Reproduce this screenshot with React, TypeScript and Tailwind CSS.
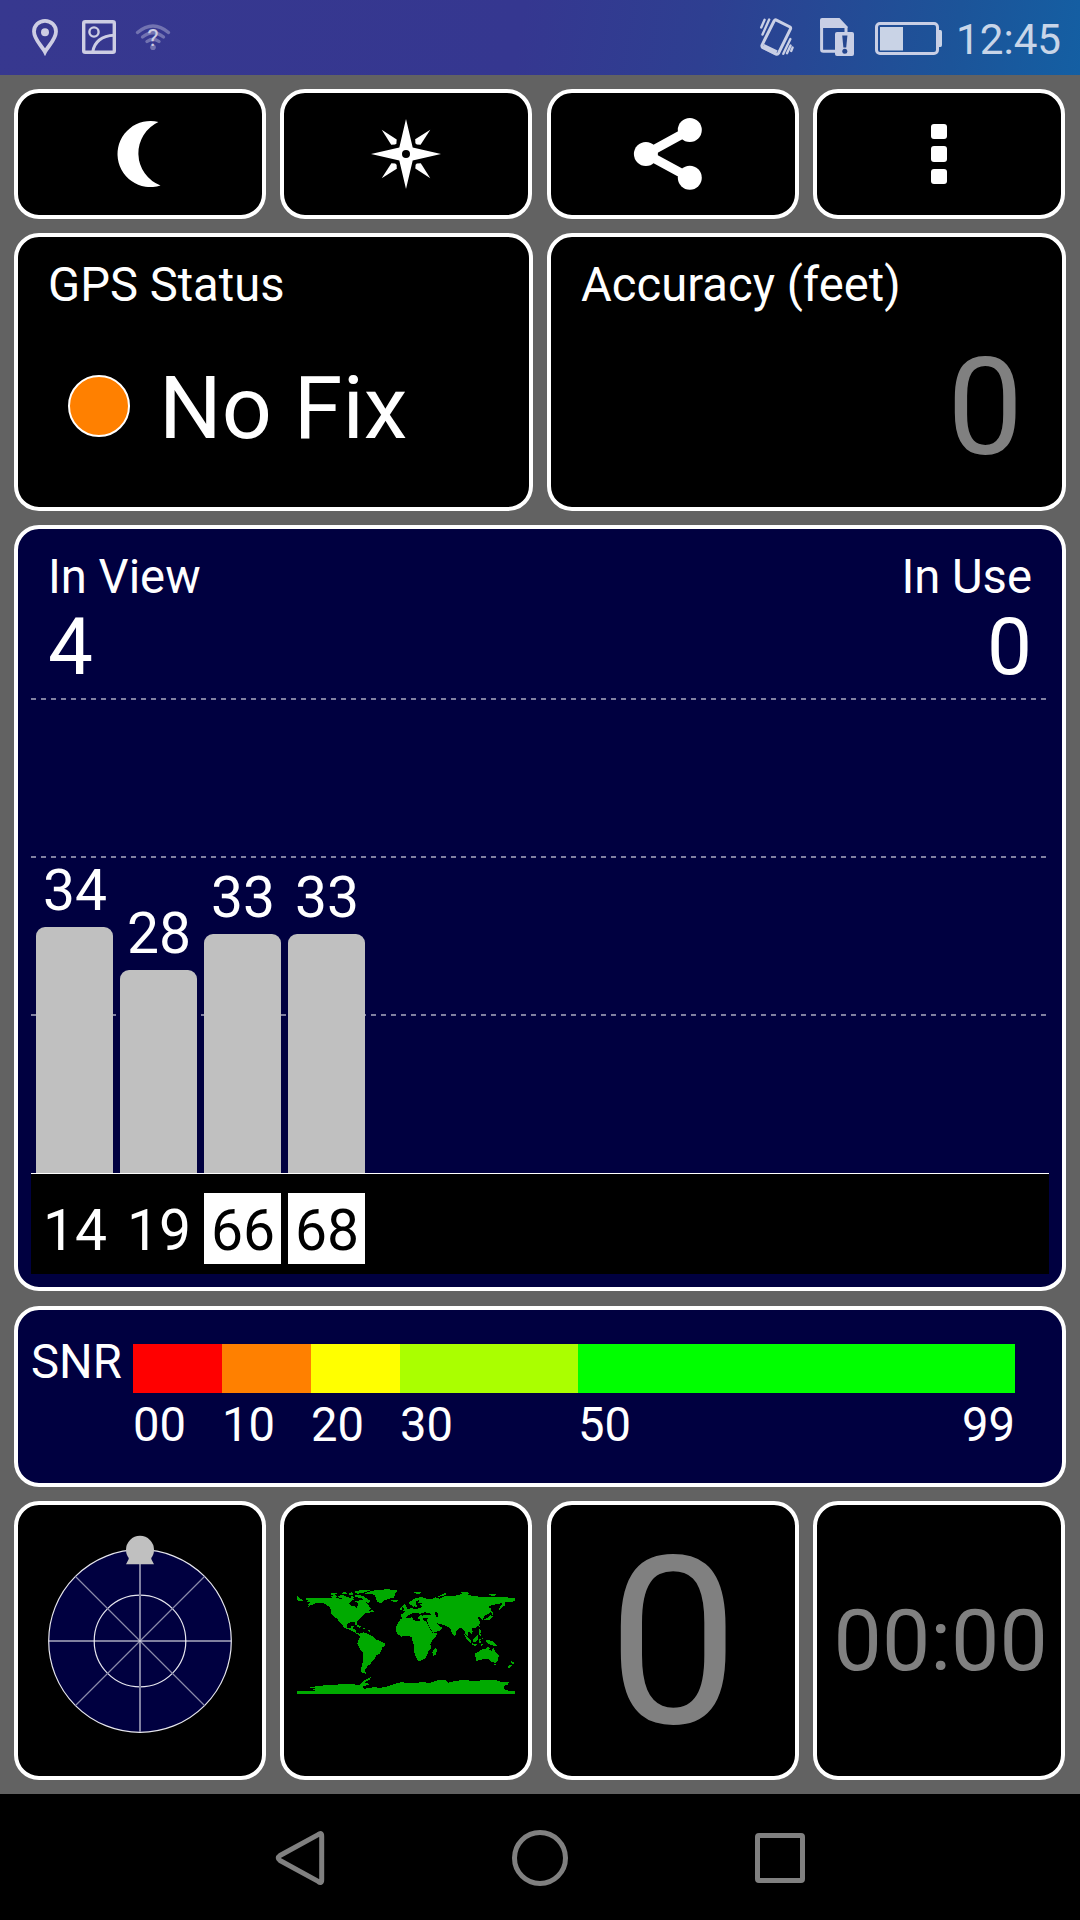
import type { ReactNode } from "react";

interface Satellite {
  id: number;
  snr: number;
  glonass: boolean;
}

const satellites: Satellite[] = [
  { id: 14, snr: 34, glonass: false },
  { id: 19, snr: 28, glonass: false },
  { id: 66, snr: 33, glonass: true },
  { id: 68, snr: 33, glonass: true },
];

const snrBands = [
  { label: "00", size: "w-[89px]", color: "bg-[#ff0000]" },
  { label: "10", size: "w-[89px]", color: "bg-[#ff8000]" },
  { label: "20", size: "w-[89px]", color: "bg-[#ffff00]" },
  { label: "30", size: "w-[178px]", color: "bg-[#aaff00]" },
  { label: "50", size: "w-[437px]", color: "bg-[#00ff00]" },
];

const PX_PER_DB = 7.24;

function Card({ className = "", children }: { className?: string; children: ReactNode }) {
  return (
    <div className={`rounded-[25px] border-4 border-white ${className}`}>{children}</div>
  );
}

function StatusBar() {
  return (
    <header className="h-[75px] flex items-center justify-between bg-[linear-gradient(100deg,#37388f_0%,#353790_48%,#2e3f91_65%,#1c5499_88%,#145fa3_100%)]">
      <svg width="180" height="75" viewBox="0 0 180 75" fill="none" stroke="#cdcde3">
        <path
          d="M45 52 C42 46 34 39.5 34 31.5 A11 10.7 0 0 1 56 31.5 C56 39.5 48 46 45 52 Z"
          strokeWidth="3.8"
        />
        <circle cx="45" cy="32.3" r="4" fill="#cdcde3" stroke="none" />
        <rect x="83.7" y="21.7" width="30.6" height="30.6" rx="1.5" strokeWidth="3.4" />
        <circle cx="94" cy="32" r="4.6" strokeWidth="2.4" />
        <path d="M92.8 52 C94 42 102 35.5 114 35.2" strokeWidth="3" />
        <g stroke="#7273b1" strokeWidth="3.4" strokeLinecap="round">
          <path d="M137.5 32.5 Q153 19.5 168.5 32.5" />
          <path d="M142.5 37 Q153 28.5 163.5 37" />
          <path d="M147 41.5 Q153 37 159 41.5" />
        </g>
        <circle cx="153" cy="47.3" r="2.8" fill="#7273b1" stroke="none" />
        <text
          x="153"
          y="45.5"
          textAnchor="middle"
          fontSize="24"
          fill="#cdcde3"
          stroke="none"
          fontFamily="Roboto, sans-serif"
        >
          ?
        </text>
      </svg>
      <div className="flex items-center">
        <svg width="200" height="75" viewBox="752 0 200 75" fill="none" stroke="#c9cfe5">
          <path
            d="M775.9 19.8 L790 27 Q791 27.7 790.5 29 L778.5 53.2 Q777.7 54.6 776 54 L762.5 47.4 Q761.6 46.6 762 45.2 L774.2 20.8 Q775 19.5 775.9 19.8 Z"
            strokeWidth="3"
          />
          <path d="M763 46.2 L776.5 52.8" strokeWidth="5" />
          <g strokeWidth="2.4" strokeLinecap="round">
            <path d="M769.2 19.5 L762.5 34.6 M764.6 19.8 L761.2 27.5" />
            <path d="M790.4 39 L783.3 53.8 M790.6 45.5 L787 53.2 M792.6 47.6 L791.2 51" />
          </g>
          <path
            d="M821.6 28 V49.5 Q821.6 51.3 823.4 51.3 H836 M846 32 V27"
            strokeWidth="3"
          />
          <path d="M820 28 V20 Q820 18 822 18 H839.5 L847.5 26.5 V28 Z" fill="#c9cfe5" stroke="none" />
          <rect x="835" y="32" width="19" height="24" rx="2" fill="#c9cfe5" stroke="none" />
          <path d="M842.2 35.5 H847.4 L846.2 47.5 H843.4 Z" fill="#26478f" stroke="none" />
          <circle cx="844.8" cy="51.2" r="2.5" fill="#26478f" stroke="none" />
          <rect x="876.5" y="23.5" width="61" height="30" rx="3.5" strokeWidth="3" />
          <rect x="880" y="27" width="23" height="23.5" fill="#c9d3e6" stroke="none" />
          <path d="M939 30 H940.5 Q942 30 942 32 V45 Q942 47 940.5 47 H939 Z" fill="#c9d3e6" stroke="none" />
        </svg>
        <span className="w-[128px] pl-[4px] pt-[4px] text-[42.2px] leading-[48px] text-[#c8d5e8]">
          12:45
        </span>
      </div>
    </header>
  );
}

function Toolbar() {
  const button = "h-[130px] bg-black flex items-center justify-center";
  return (
    <div className="grid grid-cols-[repeat(4,252px)] gap-[14.4px]">
      <Card className={button}>
        <svg width="80" height="80" viewBox="100 114 80 80" fill="white">
          <path d="M158.4 122 A33 33 0 1 0 160.5 185.5 A34.5 34.5 0 0 1 158.4 122 Z" />
        </svg>
      </Card>
      <Card className={button}>
        <svg width="80" height="80" viewBox="-40 -40 80 80" fill="white">
          <path
            fillRule="evenodd"
            d="M0 -35 L6.7 -6.5 L35 0 L6.7 6.5 L0 35 L-6.7 6.5 L-35 0 L-6.7 -6.5 Z M4 0 A4 4 0 1 0 -4 0 A4 4 0 1 0 4 0 Z"
          />
          {[0, 90, 180, 270].map((angle) => (
            <path
              key={angle}
              transform={`rotate(${angle})`}
              d="M-24.3 -24.3 L-9.3 -14.6 L-9.6 -10.8 L-10.8 -9.4 L-14.8 -9.2 Z"
            />
          ))}
        </svg>
      </Card>
      <Card className={button}>
        <svg width="80" height="80" viewBox="633 114 80 80" fill="white">
          <path d="M689.8 130 L646 154 L689.8 177.7" fill="none" stroke="white" strokeWidth="9" />
          <circle cx="645.9" cy="154" r="12" />
          <circle cx="689.8" cy="130" r="12" />
          <circle cx="689.8" cy="177.7" r="12" />
        </svg>
      </Card>
      <Card className={`${button} flex-col gap-[7px]`}>
        <span className="size-[15.4px] rounded-[3px] bg-white" />
        <span className="size-[15.4px] rounded-[3px] bg-white" />
        <span className="size-[15.4px] rounded-[3px] bg-white" />
      </Card>
    </div>
  );
}

function StatusCards() {
  return (
    <div className="mt-[14px] grid grid-cols-2 gap-[14px]">
      <Card className="h-[278px] bg-black pl-[30px] pt-[20px]">
        <div className="text-[47.2px] leading-[56px]">GPS Status</div>
        <div className="mt-[45px] flex">
          <span className="ml-[20px] mt-[17px] size-[62px] rounded-full border-2 border-white bg-[#ff8000]" />
          <span className="ml-[29px] text-[88px] leading-[100px]">No Fix</span>
        </div>
      </Card>
      <Card className="h-[278px] bg-black pl-[30px] pr-[39px] pt-[20px]">
        <div className="text-[47.2px] leading-[56px]">Accuracy (feet)</div>
        <div className="mt-[27px] text-right text-[135px] leading-[136px] text-[#808080]">0</div>
      </Card>
    </div>
  );
}

function SatelliteChart() {
  return (
    <Card className="mt-[14px] h-[766px] bg-[#000040] px-[13px]">
      <div className="h-[169px] px-[17px] pt-[20px] flex justify-between">
        <div>
          <div className="text-[47.2px] leading-[56px]">In View</div>
          <div className="mt-[2px] text-[80px] leading-[80px]">{satellites.length}</div>
        </div>
        <div className="text-right">
          <div className="text-[47.2px] leading-[56px]">In Use</div>
          <div className="mt-[2px] text-[80px] leading-[80px]">0</div>
        </div>
      </div>
      <div className="relative h-[475px]">
        <div className="absolute inset-0">
          {[75, 50, 25].map((level) => (
            <div key={level} className="h-[158px]">
              <div className="h-[2px] bg-[repeating-linear-gradient(90deg,#8080a0_0_5px,transparent_5px_10px)]" />
            </div>
          ))}
        </div>
        <div className="relative h-full flex items-end gap-[7px] pl-[5px]">
          {satellites.map((sat) => (
            <div key={sat.id} className="w-[77px]">
              <div className="mb-[8px] pl-px text-center text-[57px] leading-[57px]">{sat.snr}</div>
              <div
                className="rounded-t-[9px] bg-[#c0c0c0]"
                style={{ height: Math.round(sat.snr * PX_PER_DB) }}
              />
            </div>
          ))}
        </div>
      </div>
      <div className="h-[101px] border-t border-white bg-black flex gap-[7px] pl-[5px] pt-[19px]">
        {satellites.map((sat) => (
          <div
            key={sat.id}
            className={`h-[71px] w-[77px] pl-px text-center text-[57px] leading-[75px] ${
              sat.glonass ? "bg-white text-black" : ""
            }`}
          >
            {sat.id}
          </div>
        ))}
      </div>
    </Card>
  );
}

function SnrLegend() {
  return (
    <Card className="mt-[15px] h-[181px] bg-[#000040] pl-[13px] pt-[34px] flex text-[47.2px]">
      <span className="-mt-[6px] w-[102px] leading-[48px]">SNR</span>
      <div className="w-[882px]">
        <div className="flex">
          {snrBands.map((band) => (
            <span key={band.label} className={`h-[49px] ${band.size} ${band.color}`} />
          ))}
        </div>
        <div className="mt-[4px] flex leading-[56px]">
          {snrBands.map((band) => (
            <span key={band.label} className={`${band.size} last:flex last:justify-between`}>
              {band.label}
              {band.label === "50" && <span>99</span>}
            </span>
          ))}
        </div>
      </div>
    </Card>
  );
}

function SkyPlot() {
  return (
    <svg width="200" height="220" viewBox="-100 -110 200 220" fill="none">
      <circle r="91.3" fill="#000040" stroke="#e6e6ee" strokeWidth="1.2" />
      <circle r="45.8" stroke="#e6e6ee" strokeWidth="1.2" />
      <path d="M0 -91 V91" stroke="#8080a0" strokeWidth="2" />
      <path d="M-64.5 -64.5 L64.5 64.5 M-64.5 64.5 L64.5 -64.5" stroke="#8a8aaa" strokeWidth="1.2" />
      <path d="M-91 0 H91" stroke="white" strokeWidth="1" />
      <circle cy="-91.2" r="14" fill="#c0c0c0" />
      <path d="M-11 -84 L-11.5 -81.5 L-14 -76.8 H14 L11.5 -81.5 L11 -84 Z" fill="#c0c0c0" />
    </svg>
  );
}

function WorldMap() {
  return (
    <svg
      width="218"
      height="105"
      viewBox="51 57 654 315"
      fill="#00aa00"
      shapeRendering="crispEdges"
      className="mt-[2px]"
    >
      {/* North and Central America */}
      <path d="M51 78 L57 84 L66 89 L72 90 L66 93 L54 92 L51 90 Z M74 86 L92 83 L120 83 L150 84 L165 83 L180 86 L200 84 L215 84 L222 88 L212 94 L207 101 L213 107 L224 108 L229 114 L234 104 L232 97 L238 91 L251 91 L260 99 L267 108 L274 116 L268 122 L273 125 L265 130 L258 129 L250 136 L243 143 L237 148 L231 155 L232 165 L227 165 L224 157 L211 157 L202 161 L199 168 L203 174 L211 174 L214 168 L221 168 L220 177 L228 180 L229 188 L238 191 L236 194 L228 190 L219 184 L210 180 L199 176 L191 171 L189 165 L179 156 L171 146 L160 138 L153 129 L152 117 L146 109 L137 103 L124 98 L108 99 L99 103 L88 107 L84 104 L91 98 L80 95 L85 91 L78 90 Z" />
      <path d="M153 80 L162 74 L173 78 L167 84 L155 83 Z M174 78 L187 75 L199 80 L208 82 L195 86 L179 84 Z M181 69 L195 66 L204 70 L192 73 Z M205 69 L217 67 L222 73 L209 75 Z M211 78 L219 77 L222 84 L213 83 Z M224 74 L241 76 L253 80 L265 90 L273 93 L265 99 L253 94 L244 85 L226 81 Z M222 65 L240 61 L272 60 L261 65 L249 68 L232 72 Z M150 72 L161 68 L172 70 L160 76 Z M227 92 L236 93 L233 98 L224 96 Z M272 119 L279 119 L282 126 L273 125 Z M224 167 L237 166 L246 171 L238 173 L229 169 Z M248 174 L259 176 L252 179 Z M83 108 L89 108 L84 112 Z M264 179 L270 181 L268 186 Z" />
      {/* Greenland and Iceland */}
      <path d="M254 71 L273 63 L299 59 L327 58 L354 62 L346 68 L344 77 L340 84 L326 86 L314 91 L305 100 L294 97 L288 88 L286 78 L277 72 L265 73 Z M333 91 L348 89 L356 93 L345 97 Z" />
      {/* South America */}
      <path d="M238 192 L249 187 L261 191 L272 196 L280 199 L286 207 L299 213 L315 220 L314 227 L306 233 L303 245 L298 252 L288 257 L284 268 L276 275 L271 283 L263 287 L260 295 L254 300 L257 308 L250 309 L242 305 L243 294 L247 284 L249 266 L250 247 L241 239 L232 222 L235 211 L239 203 Z M257 309 L261 312 L254 311 Z" />
      {/* Europe and Asia */}
      <path d="M362 132 L371 130 L374 124 L383 118 L396 113 L399 117 L411 116 L425 112 L424 106 L416 106 L409 111 L402 108 L399 111 L394 105 L387 103 L387 98 L396 91 L407 84 L425 81 L438 86 L454 88 L467 82 L479 86 L490 80 L505 77 L526 77 L545 72 L563 73 L579 78 L600 80 L625 80 L650 82 L678 82 L705 84 L705 92 L697 96 L686 95 L675 97 L676 105 L667 112 L659 121 L656 116 L664 106 L667 99 L656 102 L635 105 L625 110 L633 116 L632 125 L623 133 L613 137 L610 147 L607 151 L602 143 L595 140 L596 151 L600 156 L598 166 L586 173 L573 176 L578 184 L574 194 L570 188 L563 184 L564 199 L557 194 L554 184 L546 176 L542 173 L529 182 L527 193 L523 198 L517 193 L513 180 L506 172 L495 166 L475 161 L469 159 L480 169 L487 173 L484 179 L474 184 L459 188 L453 179 L443 161 L442 150 L427 151 L416 147 L413 142 L423 134 L413 129 L402 128 L393 132 L383 137 L377 144 L365 144 Z" />
      <path d="M366 109 L374 101 L379 108 L382 120 L368 124 L372 117 Z M361 113 L366 112 L366 120 L360 120 Z M401 67 L417 65 L425 68 L414 73 Z M469 82 L482 75 L499 68 L500 73 L484 79 Z M542 67 L557 65 L568 70 L553 74 Z M626 72 L643 71 L651 75 L636 78 Z M635 121 L639 129 L638 135 L634 128 Z M632 136 L638 139 L633 148 L621 151 L611 148 L624 144 Z M598 165 L600 172 L596 170 Z" />
      {/* Africa */}
      <path d="M363 146 L379 144 L397 142 L400 149 L412 154 L424 150 L438 153 L444 165 L450 177 L457 188 L471 189 L468 200 L456 213 L451 222 L453 235 L445 245 L441 257 L433 267 L423 272 L413 272 L407 259 L402 243 L403 228 L398 215 L396 201 L381 197 L365 200 L354 193 L348 184 L349 169 L355 158 Z M469 234 L471 241 L466 255 L459 257 L457 248 L462 238 Z" />
      {/* Seas cut back out of Eurasia */}
      <path
        fill="black"
        d="M422 130 L434 127 L449 129 L453 134 L441 135 L426 137 Z M466 125 L473 128 L473 142 L467 142 Z M383 137 L395 134 L407 139 L416 139 L415 146 L399 142 Z M407 95 L418 89 L414 99 L427 99 L415 107 L407 106 Z M429 144 L443 144 L442 150 L430 149 Z"
      />
      {/* Indonesia and Oceania */}
      <path d="M553 193 L564 201 L575 213 L571 220 L561 210 Z M576 220 L592 224 L588 228 L574 225 Z M578 208 L588 200 L594 195 L594 209 L588 216 L580 215 Z M598 178 L603 183 L601 191 L606 199 L599 197 L596 187 Z M597 207 L609 205 L601 211 L605 220 L597 218 Z M602 224 L611 222 L605 228 Z M616 210 L627 211 L640 214 L652 229 L638 226 L627 223 L620 216 Z" />
      <path d="M586 249 L598 244 L608 236 L617 238 L621 231 L629 233 L628 240 L636 243 L639 232 L646 244 L656 257 L654 271 L646 278 L636 277 L628 269 L613 266 L599 271 L587 272 Z M642 283 L648 282 L646 288 Z M694 273 L703 279 L695 285 Z M690 284 L696 286 L687 294 L682 292 Z" />
      {/* Antarctica */}
      <path d="M51 363 L108 363 L96 359 L106 356 L96 353 L111 347 L150 346 L180 343 L207 343 L240 344 L249 333 L272 321 L271 328 L255 337 L270 343 L246 350 L253 356 L273 354 L282 350 L298 354 L321 350 L340 343 L363 337 L397 339 L425 337 L452 338 L473 331 L497 331 L505 338 L523 333 L552 330 L584 333 L619 330 L648 331 L665 336 L686 336 L684 343 L673 348 L671 357 L685 362 L705 362 L705 372 L51 372 Z M84 350 L98 350 L94 354 Z" />
    </svg>
  );
}

function BottomCards() {
  const tile = "h-[279px] bg-black flex items-center justify-center";
  return (
    <div className="mt-[14px] grid grid-cols-[repeat(4,252px)] gap-[14.4px]">
      <Card className={tile}>
        <SkyPlot />
      </Card>
      <Card className={tile}>
        <WorldMap />
      </Card>
      <Card className={`${tile} pl-px pt-[6px] text-[233px] leading-none text-[#808080]`}>0</Card>
      <Card className={`${tile} pl-[3px] pt-px text-[86px] leading-none text-[#808080]`}>
        00:00
      </Card>
    </div>
  );
}

function NavBar() {
  return (
    <nav className="h-[126px] bg-black">
      <svg width="1080" height="126" viewBox="0 1794 1080 126" fill="none" stroke="#808080" strokeWidth="5">
        <path
          d="M318.2 1834.6 Q321.7 1832 321.7 1836 V1880 Q321.7 1884 318.2 1881.4 L280 1860.5 Q276.5 1858 280 1855.5 Z"
          strokeLinejoin="round"
        />
        <circle cx="540" cy="1858" r="25.5" />
        <rect x="757.5" y="1835.5" width="45" height="45" rx="1.5" />
      </svg>
    </nav>
  );
}

export default function App() {
  return (
    <div className="h-[1920px] w-[1080px] overflow-hidden bg-[#626262] text-white font-[Roboto,sans-serif]">
      <StatusBar />
      <main className="h-[1719px] px-[14px] pt-[14px]">
        <Toolbar />
        <StatusCards />
        <SatelliteChart />
        <SnrLegend />
        <BottomCards />
      </main>
      <NavBar />
    </div>
  );
}
